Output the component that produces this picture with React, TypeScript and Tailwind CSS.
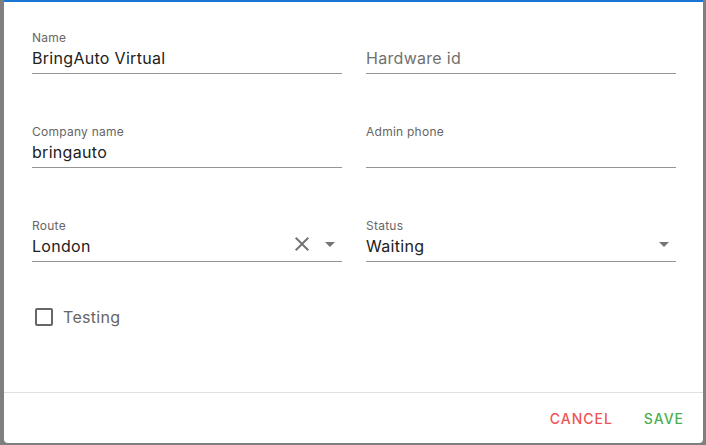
import React from "react";

const font = { fontFamily: "Inter, 'Noto Sans', sans-serif" };

function Label({ children }: { children: React.ReactNode }) {
  return <div className="h-4 text-[12px] leading-4 tracking-[0.25px] text-[#666666]">{children}</div>;
}

function Field({
  label,
  value,
  placeholder,
  right,
}: {
  label?: string;
  value?: string;
  placeholder?: string;
  right?: React.ReactNode;
}) {
  return (
    <div className="flex flex-col">
      <Label>{label ?? ""}</Label>
      <div className="flex h-7 items-start border-b border-[#949494] pb-1">
        <div
          className={
            "flex-1 text-[16px] leading-6 tracking-[0.3px] " +
            (placeholder ? "text-[#707070]" : "text-[#212121]")
          }
        >
          {value ?? placeholder}
        </div>
        {right}
      </div>
    </div>
  );
}

function Arrow() {
  return (
    <svg width="24" height="24" viewBox="0 0 24 24" className="text-[#757575]">
      <path d="M7 10l5 5 5-5z" fill="currentColor" />
    </svg>
  );
}

function ClearX() {
  return (
    <svg width="24" height="24" viewBox="0 0 24 24" className="text-[#757575]">
      <path
        d="M19 6.41 17.59 5 12 10.59 6.41 5 5 6.41 10.59 12 5 17.59 6.41 19 12 13.41 17.59 19 19 17.59 13.41 12z"
        fill="currentColor"
      />
    </svg>
  );
}

export default function App() {
  return (
    <div className="flex h-[445px] w-[706px] bg-[#7f7f7f] pl-1 pr-[3px]" style={font}>
      <div className="flex h-[443px] flex-1 flex-col rounded-b-[4px] border-t-2 border-[#1976d2] bg-white">
        <div className="flex flex-1 flex-col pl-[28px] pr-[27px] pt-[28px]">
          <div className="grid grid-cols-2 gap-x-6 gap-y-[50px]">
            <Field label="Name" value="BringAuto Virtual" />
            <Field placeholder="Hardware id" />
            <Field label="Company name" value="bringauto" />
            <Field label="Admin phone" value="" />
            <Field
              label="Route"
              value="London"
              right={
                <div className="-mt-0.5 flex items-center gap-1">
                  <ClearX />
                  <Arrow />
                </div>
              }
            />
            <Field
              label="Status"
              value="Waiting"
              right={
                <div className="-mt-0.5 flex items-center">
                  <Arrow />
                </div>
              }
            />
          </div>
          <div className="mt-[43px] flex items-center gap-[10px] pl-[3px]">
            <div className="h-[18px] w-[18px] rounded-[2px] border-2 border-[#666666]" />
            <span className="text-[16px] leading-6 tracking-[0.3px] text-[#666666]">Testing</span>
          </div>
        </div>
        <div className="flex h-[51px] items-center justify-end gap-[31px] border-t border-[#e0e0e0] pr-[19px]">
          <span className="text-[14px] font-medium tracking-[0.07em] text-[#f05454]">CANCEL</span>
          <span className="text-[14px] font-medium tracking-[0.07em] text-[#4caf50]">SAVE</span>
        </div>
      </div>
    </div>
  );
}
